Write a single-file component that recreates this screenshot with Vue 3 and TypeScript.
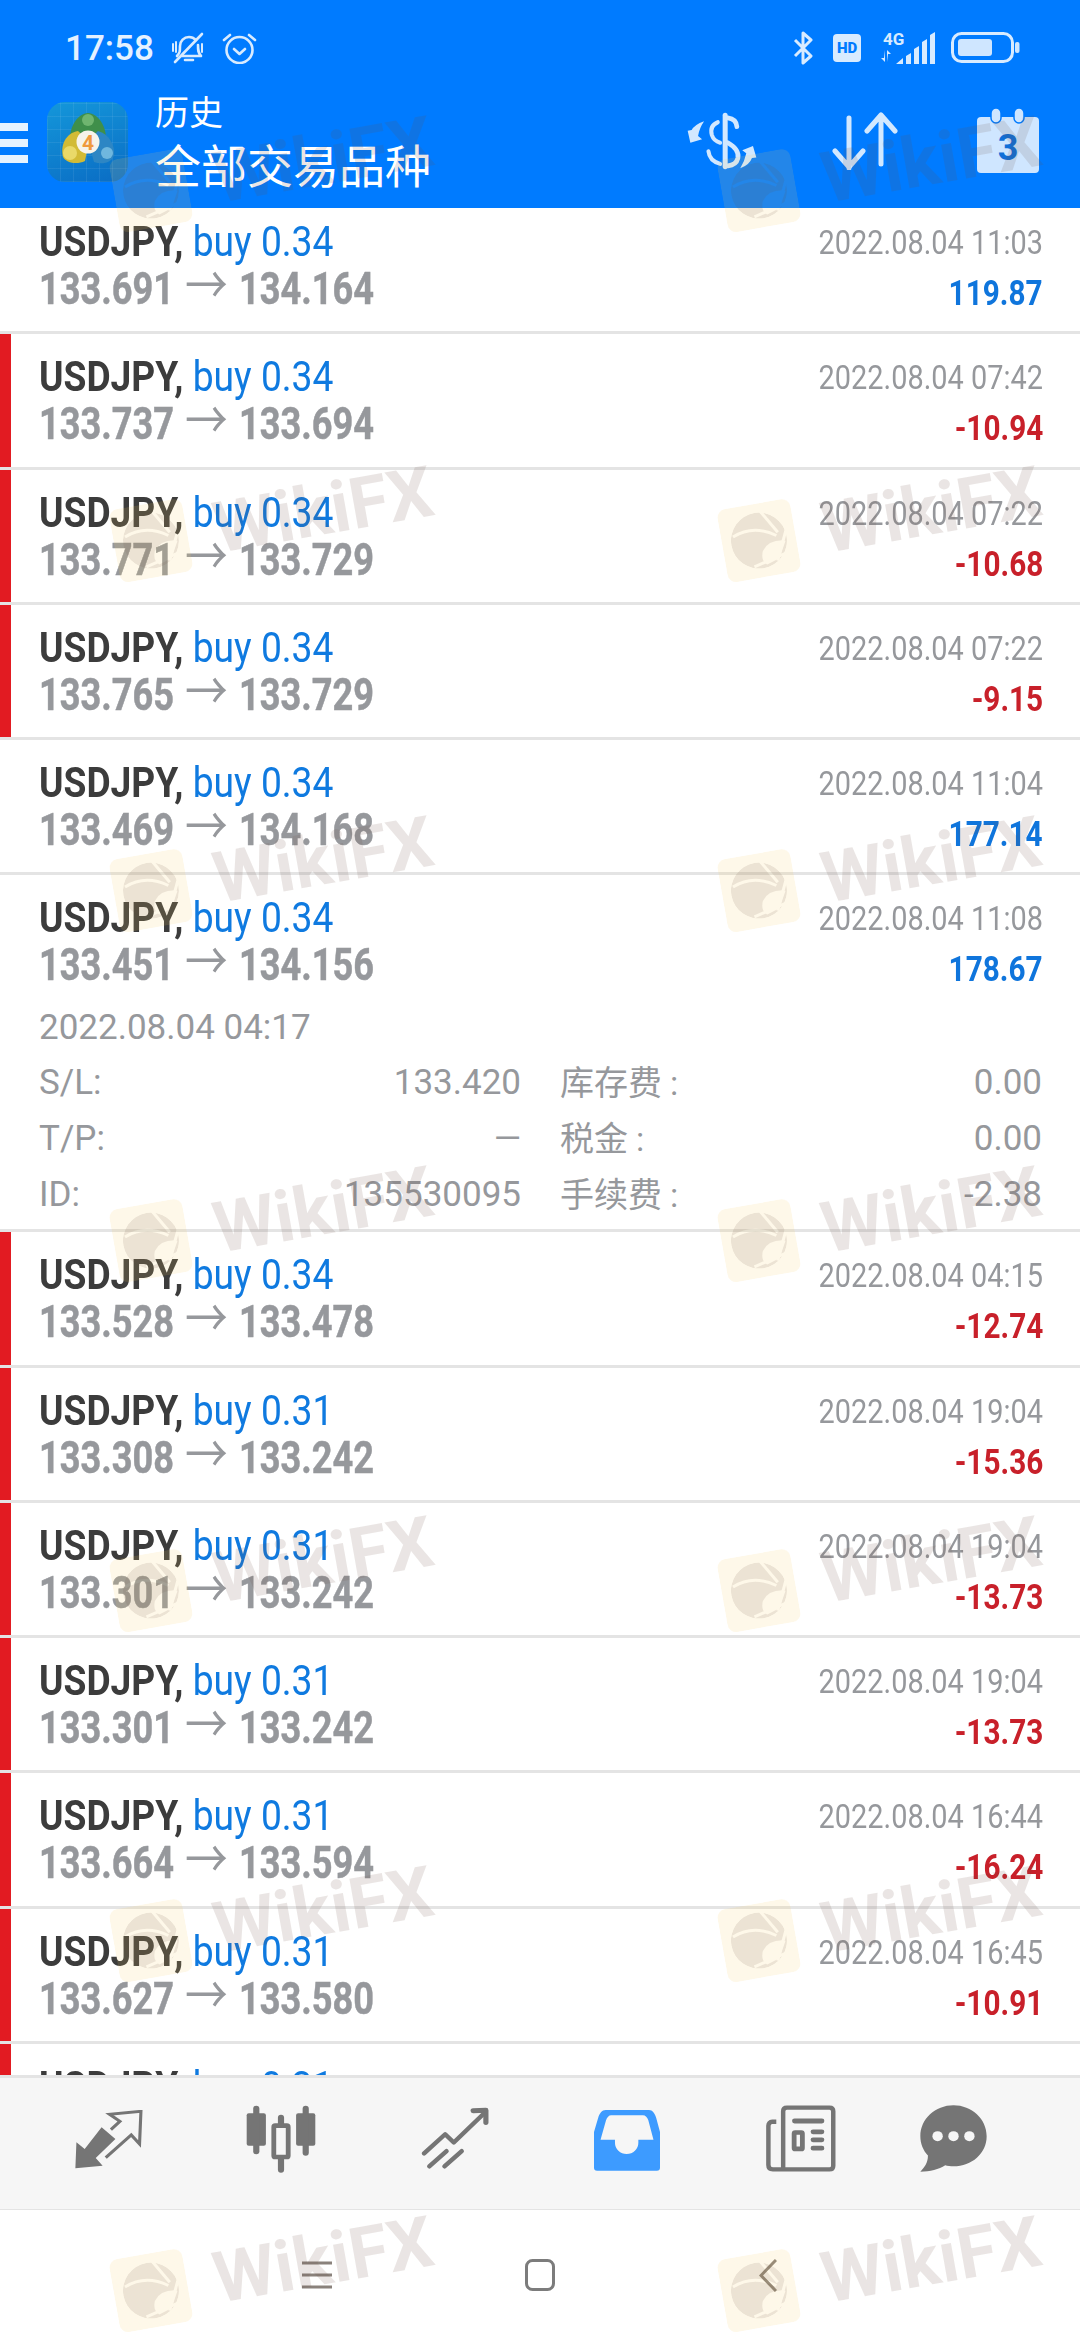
<script setup lang="ts">
interface Trade {
  lots: string
  open: string
  close: string
  time: string
  profit: string
  loss: boolean
  details?: boolean
}
const trades: Trade[] = [
  { lots: '0.34', open: '133.691', close: '134.164', time: '2022.08.04 11:03', profit: '119.87', loss: false },
  { lots: '0.34', open: '133.737', close: '133.694', time: '2022.08.04 07:42', profit: '-10.94', loss: true },
  { lots: '0.34', open: '133.771', close: '133.729', time: '2022.08.04 07:22', profit: '-10.68', loss: true },
  { lots: '0.34', open: '133.765', close: '133.729', time: '2022.08.04 07:22', profit: '-9.15', loss: true },
  { lots: '0.34', open: '133.469', close: '134.168', time: '2022.08.04 11:04', profit: '177.14', loss: false },
  { lots: '0.34', open: '133.451', close: '134.156', time: '2022.08.04 11:08', profit: '178.67', loss: false, details: true },
  { lots: '0.34', open: '133.528', close: '133.478', time: '2022.08.04 04:15', profit: '-12.74', loss: true },
  { lots: '0.31', open: '133.308', close: '133.242', time: '2022.08.04 19:04', profit: '-15.36', loss: true },
  { lots: '0.31', open: '133.301', close: '133.242', time: '2022.08.04 19:04', profit: '-13.73', loss: true },
  { lots: '0.31', open: '133.301', close: '133.242', time: '2022.08.04 19:04', profit: '-13.73', loss: true },
  { lots: '0.31', open: '133.664', close: '133.594', time: '2022.08.04 16:44', profit: '-16.24', loss: true },
  { lots: '0.31', open: '133.627', close: '133.580', time: '2022.08.04 16:45', profit: '-10.91', loss: true },
  { lots: '0.31', open: '133.627', close: '133.580', time: '2022.08.04 16:45', profit: '-10.91', loss: true },
]
const marks = Array.from({ length: 14 }, (_, i) => i)
</script>

<template>
  <div class="screen">
    <header class="top">
      <div class="status">
        <span class="clock">17:58</span>
        <svg class="bell" viewBox="0 0 35 32" fill="none" stroke="#d8ebff" stroke-width="2.6" stroke-linecap="round" stroke-linejoin="round">
          <path d="M6 24c3-3 3-5 3-10 0-5 4-9 9-9 3 0 5 1 7 3M27 13c0 5 0 8 3 11H11" />
          <path d="M14 28h8M4 30 31 2" />
          <path d="M2 12v7M5 10v10M31 12v8" stroke-width="2" />
        </svg>
        <svg class="alarm" viewBox="0 0 35 32" fill="none" stroke="#d8ebff" stroke-width="2.6" stroke-linecap="round" stroke-linejoin="round">
          <circle cx="17.5" cy="18" r="13" />
          <path d="M12 17l5.500 5 5.500-5M2 8l6-5M33 8l-6-5" />
        </svg>
        <span class="grow"></span>
        <svg class="bt" viewBox="0 0 21 34" fill="none" stroke="#d8ebff" stroke-width="3" stroke-linejoin="round">
          <path d="M2 9l16 16-8 7V2l8 7L2 25" />
        </svg>
        <div class="hd">HD</div>
        <svg class="signal" viewBox="0 0 56 32" fill="#d8ebff">
          <text x="4" y="13" class="fourg">4G</text>
          <path d="M6 18v12l-4-4h3zM8 30V18l4 4H9z" />
          <path d="M17 32l7-6v6zM27 24l5-3v11h-5zM35 17l5-3v18h-5zM43 10l5-3v25h-5zM51 3l5-3v32h-5z" />
        </svg>
        <svg class="battery" viewBox="0 0 69 32" fill="none">
          <rect x="1.500" y="1.500" width="60" height="28" rx="9" stroke="#d8ebff" stroke-width="3" />
          <rect x="7" y="7" width="34" height="17" rx="3" fill="#cfe6ff" />
          <rect x="64" y="10" width="4.500" height="11" rx="2" fill="#cfe6ff" />
        </svg>
      </div>
      <div class="bar">
        <svg class="menu" viewBox="0 0 28 42" fill="#e6f3ff">
          <rect width="28" height="8" y="0" />
          <rect width="28" height="8" y="16" />
          <rect width="28" height="8" y="32" />
        </svg>
        <div class="appicon">
          <svg viewBox="7 7 81 80">
            <path d="M30 46c-1-14 8-28 18-28s19 14 18 28z" fill="#3f8f4a" />
            <circle cx="48" cy="25" r="6" fill="#6fb56f" />
            <path d="M38 36C26 38 20 50 23 62c3 6 14 8 22 4l4-20z" fill="#d2bb35" />
            <circle cx="30" cy="58" r="7" fill="#e9d968" />
            <path d="M58 36c11 3 17 14 16 24-2 8-12 10-20 7l-6-21z" fill="#2d86c4" />
            <circle cx="67" cy="58" r="6" fill="#6fb7de" />
            <circle cx="48" cy="47" r="11.500" fill="#f6f3ea" />
            <text x="48" y="54.500" class="four">4</text>
          </svg>
        </div>
        <div class="titles">
          <div class="sub">历史</div>
          <div class="main">全部交易品种</div>
        </div>
        <span class="grow"></span>
        <svg class="act-swap" viewBox="420 335 218 170" preserveAspectRatio="none" fill="none" stroke="#d2e8ff" stroke-linecap="round">
          <path d="M537 345V495" stroke-width="15" />
          <path d="M545 352Q570 355 572 378M545 425Q580 445 575 470 570 490 545 493" stroke-width="14" />
          <path d="M515 365Q490 375 497 402 503 420 522 425M487 450Q490 478 522 487" stroke-width="12" />
          <path d="M474 362Q445 372 437 388L425 390 433 425 468 415 456 405Q460 382 474 362ZM582 500Q610 490 617 470L630 468 620 435 588 447 600 456Q595 480 582 500Z" fill="#d2e8ff" stroke="none" />
        </svg>
        <svg class="act-sort" viewBox="0 0 66 58" fill="none" stroke="#d2e8ff" stroke-width="5" stroke-linecap="round" stroke-linejoin="round">
          <path d="M17 6v50M3 39l14 16 14-16M49 52V3M35 19 49 3l14 16" />
        </svg>
        <svg class="act-cal" viewBox="0 0 62 66" fill="#cfe6ff">
          <rect x="0" y="9" width="62" height="56" rx="4" />
          <rect x="14" y="0" width="10" height="15" rx="5" stroke="#007bff" stroke-width="1.500" />
          <rect x="37" y="0" width="10" height="15" rx="5" stroke="#007bff" stroke-width="1.500" />
          <text x="31" y="52" class="calnum">3</text>
        </svg>
      </div>
    </header>

    <main class="list">
      <div class="scroller">
        <section v-for="(t, i) in trades" :key="i" class="row" :class="{ tall: t.details }">
          <div class="flag" :class="{ red: t.loss }"></div>
          <div class="body">
            <div class="line first">
              <div class="title"><b>USDJPY,</b> <span class="buy">buy {{ t.lots }}</span></div>
              <div class="time">{{ t.time }}</div>
            </div>
            <div class="line">
              <div class="price">{{ t.open }}<span class="arrow">→</span>{{ t.close }}</div>
              <div class="profit" :class="{ neg: t.loss }">{{ t.profit }}</div>
            </div>
            <div v-if="t.details" class="more">
              <div class="opened">2022.08.04 04:17</div>
              <div class="grid">
                <span>S/L:</span><span class="v">133.420</span><span>库存费<i>:</i></span><span class="v">0.00</span>
                <span>T/P:</span><span class="v">—</span><span>税金<i>:</i></span><span class="v">0.00</span>
                <span>ID:</span><span class="v">135530095</span><span>手续费<i>:</i></span><span class="v">-2.38</span>
              </div>
            </div>
          </div>
        </section>
      </div>
    </main>

    <nav class="tabs">
      <svg class="t1" viewBox="215 218 200 180" preserveAspectRatio="none">
        <path d="M219 393l3-78 24 20 49-65 40 35-57 57 20 23z" fill="#757575" />
        <path d="M322 277l26-25-30-21 91-9-4 98-24-27-74 68" fill="none" stroke="#757575" stroke-width="9" />
      </svg>
      <svg class="t2" viewBox="714 203 204 204" preserveAspectRatio="none" fill="#757575">
        <rect x="716" y="228" width="56" height="97" rx="6" />
        <rect x="735" y="205" width="18" height="146" rx="9" />
        <rect x="860" y="228" width="56" height="97" rx="6" />
        <rect x="879" y="205" width="18" height="150" rx="9" />
        <rect x="807" y="232" width="18" height="174" rx="9" />
        <rect x="795" y="265" width="42" height="94" rx="4" fill="#f6f6f6" stroke="#757575" stroke-width="14" />
      </svg>
      <svg class="t3" viewBox="1220 208 197 190" preserveAspectRatio="none" fill="none" stroke="#757575" stroke-width="13" stroke-linecap="round" stroke-linejoin="round">
        <path d="M1229 348l61-58 25 25 88-88" />
        <path d="M1371 219l37-1v37" stroke-width="15" />
        <path d="M1244 387l50-46M1288 387l50-46" />
      </svg>
      <svg class="t4" viewBox="158 212 192 183" preserveAspectRatio="none">
        <path d="M192 212h126c10 0 17 10 21 24l11 42v107c0 6-3 9-9 9H167c-6 0-9-3-9-9V278l12-42c4-14 11-24 22-24z" fill="#3d9bff" />
        <path d="M208 228h92c8 0 13 6 16 15l15 58h-44v9a33 33 0 0 1-68 0v-9h-42l16-58c3-9 8-15 15-15z" fill="#f6f6f6" />
      </svg>
      <svg class="t5" viewBox="656 203 204 200" preserveAspectRatio="none" fill="none" stroke="#757575">
        <path d="M706 395V222c0-7 4-11 11-11h124c7 0 11 4 11 11v162c0 7-4 11-11 11H676c-9 0-13-4-13-13V265c0-7 4-12 11-12h12" stroke-width="13" />
        <rect x="732" y="243" width="94" height="15" rx="7" fill="#757575" stroke="none" />
        <rect x="738" y="285" width="24" height="49" rx="3" stroke-width="14" />
        <path d="M793 283h26M793 307h26M793 332h26" stroke-width="14" stroke-linecap="round" />
      </svg>
      <svg class="t6" viewBox="1102 203 194 200" preserveAspectRatio="none">
        <path d="M1199 204c53 0 96 41 96 92s-43 90-96 90c-8 0-18-1-24-3-18 12-44 19-72 19 12-13 22-26 22-48-14-16-22-36-22-58 0-51 43-92 96-92z" fill="#757575" />
        <circle cx="1153" cy="296" r="15" fill="#f6f6f6" />
        <circle cx="1199" cy="296" r="15" fill="#f6f6f6" />
        <circle cx="1245" cy="296" r="15" fill="#f6f6f6" />
      </svg>
    </nav>

    <footer class="sysnav">
      <svg class="n1" viewBox="0 0 30 28" stroke="#8a827c" stroke-width="2.800">
        <path d="M0 2h30M0 14h30M0 26h30" />
      </svg>
      <svg class="n2" viewBox="0 0 30 32" fill="none" stroke="#7c7c7c" stroke-width="3">
        <rect x="1.500" y="1.500" width="27" height="29" rx="6" />
      </svg>
      <svg class="n3" viewBox="0 0 18 33" fill="none" stroke="#8a827c" stroke-width="3">
        <path d="M17 1 2 16.500 17 32" />
      </svg>
    </footer>

    <div class="marks">
      <div v-for="m in marks" :key="m" class="cell">
        <div class="mark">
          <svg class="eagle" viewBox="0 0 74 74">
            <defs>
              <mask id="eagle-cut">
                <circle cx="37" cy="37" r="28" fill="#fff" />
                <path d="M12 29Q34 20 55 35M43 8 57 32M66 30 52 60M28 62 62 54" fill="none" stroke="#000" stroke-width="3" />
                <path d="M61 41Q46 38 39 48 35 57 41 62L54 58 63 42Z" fill="#000" />
              </mask>
            </defs>
            <rect width="74" height="74" rx="9" fill="#f7cf62" fill-opacity="0.14" />
            <circle cx="37" cy="37" r="28" fill="#6e4f45" fill-opacity="0.12" mask="url(#eagle-cut)" />
          </svg>
          <span class="wm">WikiFX</span>
        </div>
      </div>
    </div>
  </div>
</template>

<style scoped>
.screen {
  position: relative;
  width: 1080px;
  height: 2340px;
  overflow: hidden;
  display: flex;
  flex-direction: column;
  background: #fff;
  font-family: Roboto, "Noto Sans CJK SC", sans-serif;
}
.grow { flex: 1; }
.top {
  position: relative;
  z-index: 1;
  height: 208px;
  flex: none;
  background: #007bff;
  color: #fff;
}
.status {
  height: 96px;
  display: flex;
  align-items: center;
  padding: 0 60px 0 65px;
}
.clock {
  font-size: 35px;
  font-weight: 500;
  color: #e4f1ff;
  width: 106px;
}
.bell { width: 35px; height: 32px; }
.alarm { width: 35px; height: 32px; margin-left: 16px; }
.bt { width: 21px; height: 34px; }
.hd {
  width: 28px;
  height: 28px;
  margin-left: 19px;
  border-radius: 4px;
  background: #d8ebff;
  color: #007bff;
  font-size: 15px;
  font-weight: 900;
  line-height: 28px;
  text-align: center;
}
.signal { width: 56px; height: 32px; margin-left: 18px; }
.fourg { font: 700 17px Roboto, sans-serif; }
.battery { width: 69px; height: 32px; margin-left: 16px; }
.bar {
  height: 112px;
  display: flex;
  align-items: flex-start;
}
.menu { width: 28px; height: 42px; margin-top: 27px; }
.appicon {
  width: 81px;
  height: 80px;
  margin: 6px 0 0 19px;
  border-radius: 18px;
  background:
    repeating-linear-gradient(0deg, rgba(255, 255, 255, 0.07) 0 1px, transparent 1px 13px),
    repeating-linear-gradient(90deg, rgba(255, 255, 255, 0.07) 0 1px, transparent 1px 13px),
    linear-gradient(160deg, #1497da, #0a6cc4);
}
.appicon svg { display: block; width: 81px; height: 80px; }
.four { font: 700 21px Roboto, sans-serif; fill: #ef9a3d; text-anchor: middle; }
.calnum { font: 700 36px Roboto, sans-serif; fill: #0f6fd8; text-anchor: middle; }
.titles { margin: -5px 0 0 27px; }
.sub { font-size: 34px; line-height: 44px; font-weight: 400; }
.main { font-size: 46px; line-height: 56px; margin-top: 4px; font-weight: 400; }
.act-swap { width: 73px; height: 58px; margin: 16px 73px 0 0; }
.act-sort { width: 66px; height: 58px; margin: 16px 79px 0 0; }
.act-cal { width: 62px; height: 66px; margin: 12px 41px 0 0; }

.list {
  flex: 1;
  min-height: 0;
  overflow: hidden;
}
.scroller { margin-top: -9px; }
.row {
  display: flex;
  height: 135.25px;
  box-sizing: border-box;
  border-bottom: 3px solid #e4e4e4;
}
.row.tall { height: 357px; }
.flag { width: 11px; flex: none; }
.flag.red { background: #e21b22; }
.body {
  flex: 1;
  padding: 18px 37px 0 28px;
  min-width: 0;
}
.line {
  display: flex;
  justify-content: space-between;
  height: 48px;
}
.line.first { height: 44px; }
.title, .price {
  white-space: nowrap;
  font-size: 43px;
  line-height: 48px;
  transform-origin: left center;
}
.title { transform: scaleX(0.865); }
.title b { font-weight: 700; color: #3c3c3c; }
.buy { color: #0f7ae0; }
.price {
  font-weight: 700;
  color: #96989c;
  font-size: 44px;
  margin-top: -3px;
  transform: scaleX(0.822);
  -webkit-text-stroke: 0.5px #96989c;
}
.arrow {
  font-family: "Noto Sans CJK SC", sans-serif;
  font-weight: 400;
  font-size: 52px;
  line-height: 48px;
  margin: 0 13.5px;
  -webkit-text-stroke: 0;
}
.time, .profit {
  white-space: nowrap;
  line-height: 48px;
  transform: scaleX(0.85);
  transform-origin: right center;
}
.time { font-size: 34px; color: #96989c; margin-top: 1px; }
.profit { font-size: 35px; font-weight: 700; color: #0f75dc; margin-top: 9px; }
.profit.neg { color: #c8202a; }
.more {
  font-size: 35px;
  color: #96989c;
}
.opened { line-height: 48px; margin-top: 19px; }
.grid {
  display: grid;
  grid-template-columns: 120px 362px 158px 363px;
  grid-auto-rows: 56px;
  line-height: 56px;
  margin-top: 3px;
}
.grid span:nth-child(4n + 3) { margin-left: 39px; white-space: nowrap; font-size: 34px; }
.grid i { font-style: normal; margin-left: 8px; }
.v { text-align: right; }

.tabs {
  flex: none;
  height: 135px;
  box-sizing: border-box;
  display: flex;
  background: #f6f6f6;
  border-top: 3px solid #e4e4e4;
  border-bottom: 1px solid #e4e4e4;
}
.tabs svg { display: block; flex: none; }
.t1 { width: 69px; height: 60px; margin: 32px 0 0 74px; }
.t2 { width: 70px; height: 68px; margin: 27px 0 0 103px; }
.t3 { width: 68px; height: 63px; margin: 29px 0 0 105px; }
.t4 { width: 66px; height: 61px; margin: 32px 0 0 105px; }
.t5 { width: 70px; height: 67px; margin: 27px 0 0 106px; }
.t6 { width: 67px; height: 67px; margin: 27px 0 0 84px; }

.sysnav {
  flex: none;
  height: 130px;
  display: flex;
  align-items: flex-start;
}
.sysnav svg { display: block; flex: none; }
.n1 { width: 30px; height: 28px; margin: 51px 0 0 302px; }
.n2 { width: 30px; height: 32px; margin: 49px 0 0 193px; }
.n3 { width: 18px; height: 33px; margin: 49px 0 0 204px; }

.marks {
  position: absolute;
  top: -7px;
  left: 0;
  width: 1216px;
  display: grid;
  grid-template-columns: 608px 608px;
  grid-auto-rows: 350px;
  pointer-events: none;
  z-index: 2;
}
.cell {
  display: flex;
  align-items: center;
  padding-left: 112px;
}
.mark {
  display: flex;
  align-items: center;
  gap: 27px;
  transform: rotate(-10deg);
}
.eagle { width: 74px; height: 74px; flex: none; }
.wm {
  font-size: 71px;
  font-weight: 700;
  color: #6e4f45;
  opacity: 0.14;
  white-space: nowrap;
}
</style>
